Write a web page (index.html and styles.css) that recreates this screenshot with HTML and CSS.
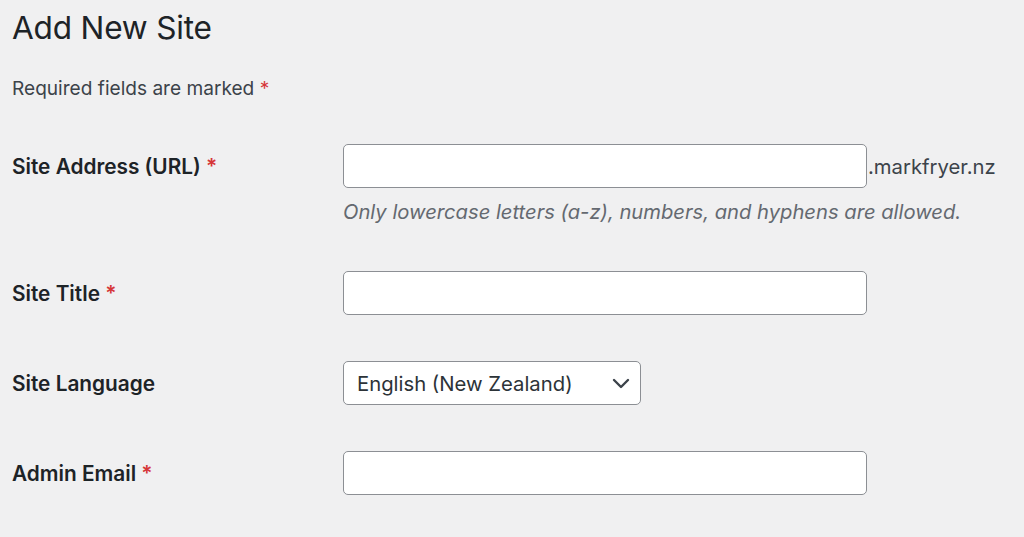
FILE: index.html
```html
<!DOCTYPE html>
<html lang="en">
<head>
<meta charset="utf-8">
<title>Add New Site</title>
<link rel="stylesheet" href="styles.css">
</head>
<body>
<div class="wrap">
  <h1 class="page-title">Add New Site</h1>
  <p class="required-note">Required fields are marked <span class="req">*</span></p>
  <form class="form-table">
    <div class="row row-first">
      <label class="label" for="site-address">Site Address (URL) <span class="req">*</span></label>
      <div class="field">
        <div class="inline">
          <input class="text-input" id="site-address" type="text">
          <span class="suffix">.markfryer.nz</span>
        </div>
        <p class="description">Only lowercase letters (a-z), numbers, and hyphens are allowed.</p>
      </div>
    </div>
    <div class="row">
      <label class="label" for="site-title">Site Title <span class="req">*</span></label>
      <div class="field"><input class="text-input" id="site-title" type="text"></div>
    </div>
    <div class="row">
      <label class="label" for="site-lang">Site Language</label>
      <div class="field">
        <div class="select">
          <span class="select-value">English (New Zealand)</span>
          <svg class="chevron" width="20" height="20" viewBox="0 0 20 20" aria-hidden="true"><path d="M3 7 L10 14 L17 7" fill="none" stroke="#3c434a" stroke-width="2.4" stroke-linecap="round" stroke-linejoin="round"/></svg>
        </div>
      </div>
    </div>
    <div class="row">
      <label class="label" for="admin-email">Admin Email <span class="req">*</span></label>
      <div class="field"><input class="text-input" id="admin-email" type="text"></div>
    </div>
  </form>
</div>
</body>
</html>
```
FILE: styles.css
```css
html, body {
  margin: 0;
  padding: 0;
  background: #f0f0f1;
}
body {
  font-family: Inter, "Noto Sans", "Liberation Sans", sans-serif;
  color: #1d2327;
}
.wrap {
  padding: 8px 12px 0 12px;
}
.page-title {
  margin: 0;
  font-size: 31.6px;
  line-height: 40px;
  font-weight: 400;
  color: #1d2327;
  letter-spacing: -0.2px;
}
.required-note {
  margin: 27px 0 0 0;
  font-size: 19.1px;
  line-height: 26px;
  color: #3c434a;
}
.req {
  color: #d63638;
}
.form-table {
  margin-top: 24px;
}
.row {
  display: grid;
  grid-template-columns: 331px 1fr;
  align-items: start;
  padding: 23px 0;
}
.row-first {
  padding-top: 19px;
}
.label {
  font-size: 20.8px;
  font-weight: 600;
  line-height: 42px;
  color: #1d2327;
  padding-top: 2px;
}
.field {
  display: flex;
  flex-direction: column;
}
.inline {
  display: flex;
  align-items: center;
}
.text-input {
  box-sizing: border-box;
  width: 524px;
  height: 44px;
  margin: 0;
  border: 1px solid #8c8f94;
  border-radius: 5px;
  background: #fff;
  font: inherit;
  font-size: 20px;
  padding: 0 12px;
}
.suffix {
  font-size: 20.3px;
  color: #3c434a;
  margin-left: 1px;
}
.description {
  margin: 11px 0 0 0;
  font-size: 20.2px;
  line-height: 26px;
  font-style: italic;
  color: #646970;
}
.select {
  box-sizing: border-box;
  width: 298px;
  height: 44px;
  border: 1px solid #8c8f94;
  border-radius: 5px;
  background: #fff;
  display: flex;
  align-items: center;
  justify-content: space-between;
  padding: 0 9px 0 13px;
}
.select-value {
  font-size: 20.3px;
  color: #2c3338;
}
.chevron {
  display: block;
}
```
